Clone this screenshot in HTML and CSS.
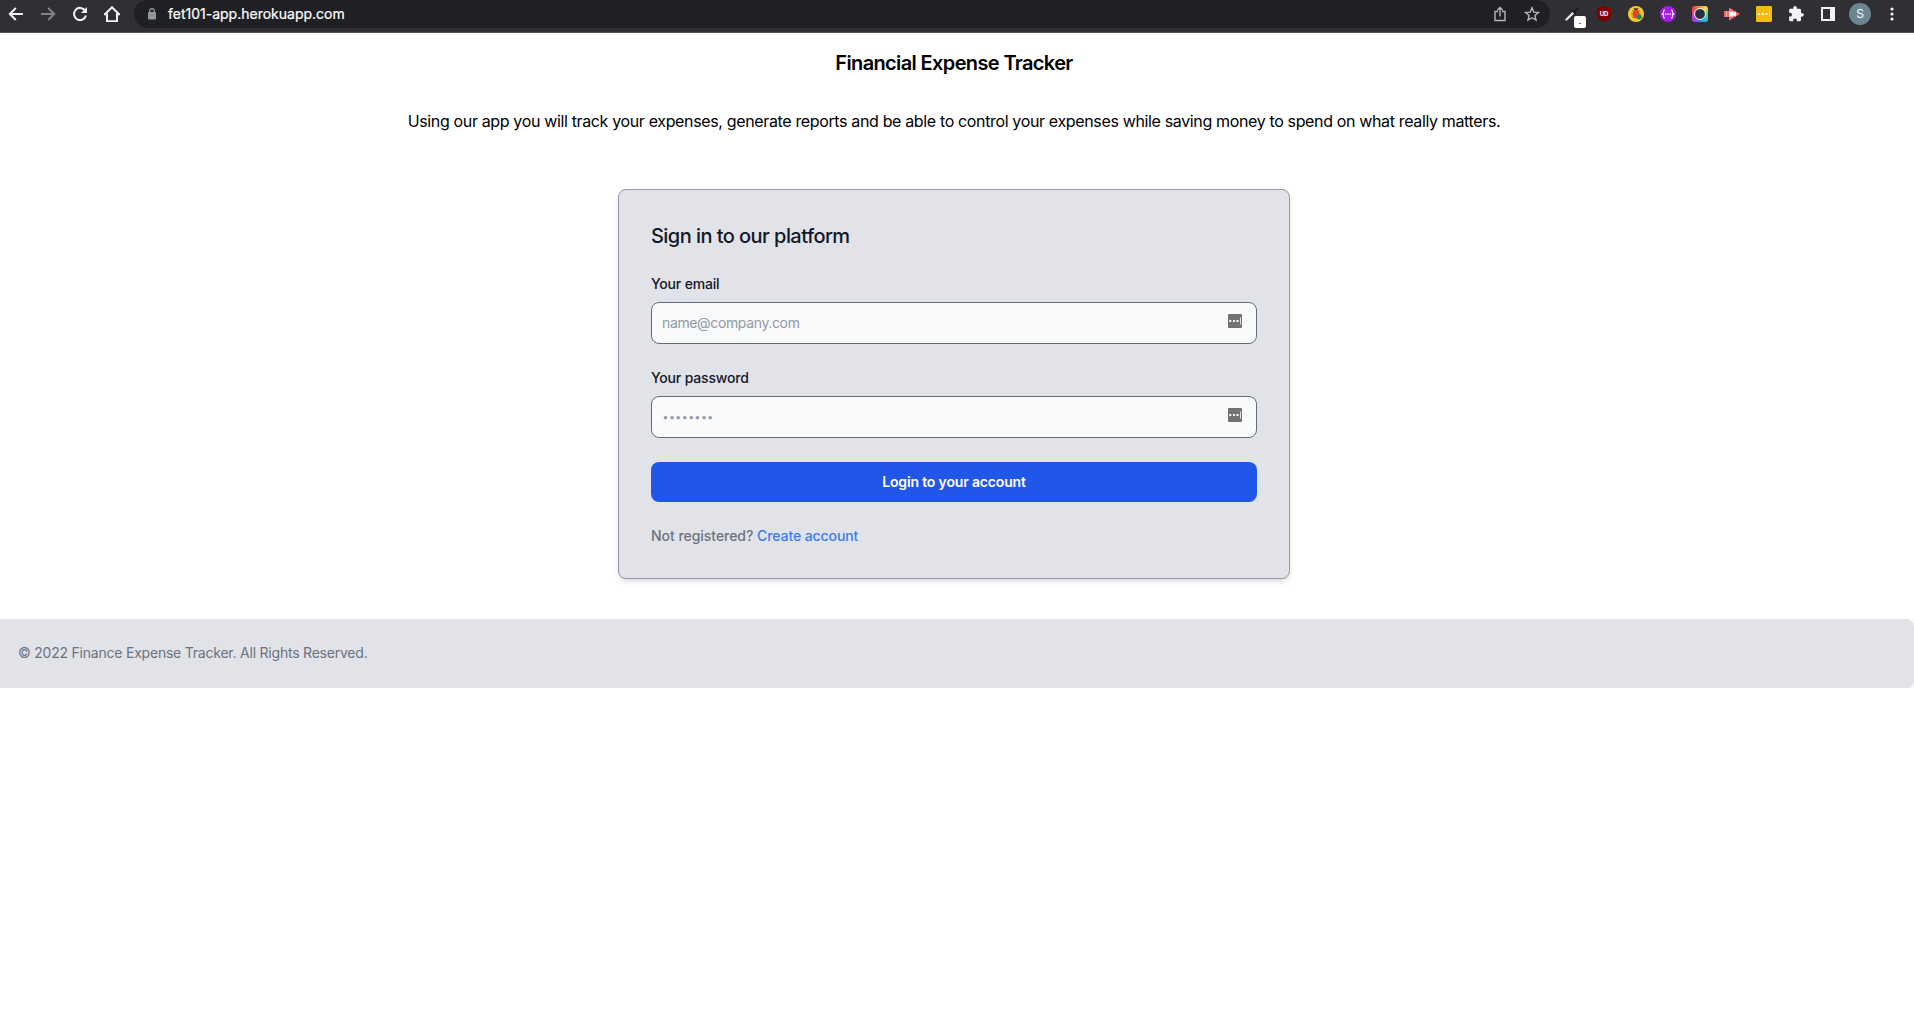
FILE: index.html
```html
<!DOCTYPE html>
<html lang="en">
<head>
<meta charset="utf-8">
<title>Financial Expense Tracker</title>
<link rel="stylesheet" href="styles.css">
</head>
<body>
<header class="toolbar">
  <span class="cell"><svg width="16" height="16" viewBox="0 0 16 16"><path class="line bright" d="M15 8H2M7.8 2 1.8 8l6 6"/></svg></span>
  <span class="cell"><svg width="16" height="16" viewBox="0 0 16 16"><path class="line dim" d="M1 8h13M8.2 2l6 6-6 6"/></svg></span>
  <span class="cell"><svg width="16" height="16" viewBox="0 0 16 16"><path class="line bright" d="M13.2 4.6A6.1 6.1 0 1 0 14 9.6"/><path fill="#f1f3f4" d="M15 1v6H9z"/></svg></span>
  <span class="cell"><svg width="16" height="16" viewBox="0 0 16 16"><path class="line bright" d="M.9 8.2 8 1.3l7.1 6.9H13v7H3v-7z"/></svg></span>
  <div class="address">
    <svg width="10" height="12" viewBox="0 0 10 12"><path fill="none" stroke="#9aa0a6" stroke-width="1.2" d="M2.7 5V3a2.3 2.3 0 0 1 4.6 0v2"/><rect x="1" y="4" width="8" height="7.5" rx="1" fill="#8e979d"/></svg>
    <span class="url">fet101-app.herokuapp.com</span>
    <span class="cell"><svg width="16" height="16" viewBox="0 0 16 16"><path class="thin" d="M6 5.500H3v9h10v-9h-3M8 10.500V1.600M5.300 4.200 8 1.500l2.700 2.700"/></svg></span>
    <span class="cell"><svg width="16" height="16" viewBox="0 0 16 16"><path class="thin" d="m8 1.8 1.8 4.3 4.7.4-3.6 3 1.1 4.6-4-2.400-4 2.400 1.100-4.600-3.600-3 4.700-.4z"/></svg></span>
  </div>
  <span class="cell picker"><svg width="16" height="16" viewBox="0 0 16 16"><path d="m2.500 13.500 6.500-6.500" stroke="#e5e7e8" stroke-width="2.400" stroke-linecap="round"/><path d="m8.500 4.500 3 3M10.500 5.500 13.500 2.500" stroke="#1b1c1e" stroke-width="2" stroke-linecap="round"/></svg><b class="badge">.</b></span>
  <span class="cell"><svg width="16" height="16" viewBox="0 0 16 16"><path fill="#800000" d="M8 0c2 1.300 4 2 7 2.200V8c0 4-3 6.500-7 8-4-1.500-7-4-7-8V2.200C4 2 6 1.300 8 0z"/><text class="shield" x="8" y="9.700">UD</text></svg></span>
  <span class="cell"><svg width="16" height="16" viewBox="0 0 16 16"><circle cx="8" cy="8" r="8" fill="#f7c92f"/><path stroke="#a0632b" stroke-width=".8" d="m4 4 8 8M3 8h10M12 4l-8 8M5.500 2.500 8 5l2.500-2.500"/><ellipse cx="8" cy="8" rx="3.400" ry="4.600" fill="#d94b24"/><circle cx="11.300" cy="11" r="2.500" fill="#178b65"/></svg></span>
  <span class="cell"><svg width="16" height="16" viewBox="0 0 16 16"><circle cx="8" cy="8" r="8" fill="#a51ee8"/><path fill="none" stroke="#fff" stroke-width="1.100" d="M5 4q-1.500 0-1.500 1.500V7L2.300 8l1.200 1v1.500Q3.500 12 5 12M11 4q1.500 0 1.500 1.500V7l1.200 1-1.200 1v1.500Q12.500 12 11 12"/><path fill="#fff" d="M5 7.400h1.500v1.300H5zM7.300 7.400h1.500v1.300H7.300zM9.600 7.400h1.500v1.300H9.600z"/></svg></span>
  <span class="cell"><i class="rainbow"></i></span>
  <span class="cell"><svg width="16" height="16" viewBox="0 0 16 16"><path fill="#ff6568" d="M0 5h5V1.500L16 8 5 14.500V11H0z"/><path fill="#fff" d="M5 5.500h4v1.200L12 5.500v5L9 9.300v1.200H5z"/><path stroke="#f4a9aa" d="M2.500 5v6"/></svg></span>
  <span class="cell"><svg width="16" height="16" viewBox="0 0 16 16"><rect width="16" height="16" rx="1.300" fill="#f2b90f"/><path fill="#fff" d="M2 7h2v2H2zM5.700 7h2v2h-2zM9.400 7h2v2h-2z"/><path stroke="#f9dc82" d="M13.500 5v6"/></svg></span>
  <span class="cell"><svg width="16" height="16" viewBox="0 0 24 24"><path fill="#f1f3f4" d="M21 10.500h-1.500V6.300a2 2 0 0 0-2-2h-4.200V2.800a2.700 2.700 0 0 0-5.400 0v1.500H3.700a2 2 0 0 0-2 2v4h1.500a2.800 2.800 0 0 1 0 5.600H1.700V21a2 2 0 0 0 2 2h4v-1.500a2.800 2.800 0 0 1 5.600 0V23h4.200a2 2 0 0 0 2-2v-5H21a2.750 2.750 0 0 0 0-5.500z"/></svg></span>
  <span class="cell"><svg width="14" height="14" viewBox="0 0 14 14"><path fill="#f1f3f4" fill-rule="evenodd" d="M0 0h14v14H0zM2 2v10h7V2z"/></svg></span>
  <span class="cell"><span class="avatar">S</span></span>
  <span class="cell"><svg width="4" height="14" viewBox="0 0 4 14"><g fill="#f1f3f4"><circle cx="2" cy="2" r="1.600"/><circle cx="2" cy="7" r="1.600"/><circle cx="2" cy="12" r="1.600"/></g></svg></span>
</header>

<main class="page">
  <h1 class="title">Financial Expense Tracker</h1>
  <p class="lead">Using our app you will track your expenses, generate reports and be able to control your expenses while saving money to spend on what really matters.</p>
  <form class="card">
    <h2 class="heading">Sign in to our platform</h2>
    <label class="label">Your email</label>
    <div class="field"><span class="placeholder">name@company.com</span>
      <svg class="filler" width="14" height="14" viewBox="0 0 14 14"><rect width="14" height="14" rx="1" fill="#737373"/><path fill="#fff" d="M1.300 6h2v2h-2zM5 6h2v2H5zM8.500 6h2v2h-2z"/><path stroke="#ddd" d="M12.500 3.500v7"/></svg>
    </div>
    <label class="label">Your password</label>
    <div class="field"><span class="placeholder dots">••••••••</span>
      <svg class="filler" width="14" height="14" viewBox="0 0 14 14"><rect width="14" height="14" rx="1" fill="#737373"/><path fill="#fff" d="M1.300 6h2v2h-2zM5 6h2v2H5zM8.500 6h2v2h-2z"/><path stroke="#ddd" d="M12.500 3.500v7"/></svg>
    </div>
    <button class="login" type="button">Login to your account</button>
    <div class="register">Not registered? <a class="link">Create account</a></div>
  </form>
</main>
<footer class="footer">© 2022 Finance Expense Tracker. All Rights Reserved.</footer>
</body>
</html>
```
FILE: styles.css
```css
*, ::before, ::after { box-sizing: border-box; }
body { margin: 0; background: #fff; color: #000; font-family: Inter, "Liberation Sans", sans-serif; }
h1, h2, p { margin: 0; }
svg { display: block; flex: none; }

.toolbar { display: flex; height: 33px; padding-right: 6px; background: #303034; border-bottom: 1px solid #55565a; }
.cell { display: flex; flex: none; align-items: center; justify-content: center; width: 32px; height: 28px; }
.line { fill: none; stroke-width: 2; }
.bright { stroke: #f1f3f4; }
.dim { stroke: #828387; }
.thin { fill: none; stroke: #b4b6b9; stroke-width: 1.4; }
.address { display: flex; flex: 1; align-items: center; height: 28px; margin: 0 6px; padding: 0 2px 0 13px; border-radius: 14px; background: #1f2024; }
.url { flex: 1; margin-left: 11px; color: #fff; font-size: 14px; line-height: 28px; -webkit-text-stroke: .2px #fff; }
.picker { position: relative; }
.badge { position: absolute; left: 18px; top: 16px; width: 12px; height: 12px; border-radius: 2px; background: #fff; color: #000; font-size: 8px; font-weight: 500; line-height: 11px; text-align: center; }
.shield { fill: #fff; font-size: 6px; font-weight: 700; text-anchor: middle; }
.rainbow { display: flex; align-items: center; justify-content: center; width: 16px; height: 16px; border-radius: 3px; background: conic-gradient(#ff9a3c, #ffdc3d, #41d477, #22c9d8, #367bf5, #a63be8, #e83bc0, #f4484b, #ff9a3c); }
.rainbow::after { content: ""; width: 12px; height: 12px; border: 1.5px solid #fff; border-radius: 50%; background: #263039; }
.avatar { width: 22px; height: 22px; border-radius: 50%; background: #6b8591; color: #fff; font-size: 12px; line-height: 22px; text-align: center; }

.page { display: flex; flex-direction: column; align-items: center; padding: 16px 6px 40px 0; }
.title { font-size: 20px; font-weight: 600; line-height: 28px; letter-spacing: -.63px; }
.lead { margin-top: 32px; font-size: 16px; line-height: 24px; letter-spacing: -.354px; white-space: nowrap; }
.card { width: 672px; height: 390px; margin-top: 56px; padding: 32px; border: 1px solid #9299a8; border-radius: 8px; background: #e2e3e8; box-shadow: 0 4px 6px -1px rgba(0,0,0,.1), 0 2px 4px -2px rgba(0,0,0,.1); }
.heading { margin-bottom: 24px; color: #111827; font-size: 20px; font-weight: 500; line-height: 28px; letter-spacing: -.55px; }
.label { display: block; margin-bottom: 8px; color: #111827; font-size: 14px; font-weight: 500; line-height: 20px; letter-spacing: -.18px; }
.field { display: flex; justify-content: space-between; height: 42px; margin-bottom: 24px; padding: 10px 14px 10px 10px; border: 1px solid #646b7b; border-radius: 8px; background: #f9fafb; }
.filler { margin-top: 1px; }
.placeholder { color: #9299a6; font-size: 14px; line-height: 20px; letter-spacing: -.36px; }
.dots { margin-left: .5px; padding-top: 1px; font-size: 10.5px; letter-spacing: .5px; }
.login { display: block; width: 100%; height: 40px; padding: 0; border: 0; border-radius: 8px; background: #2157e8; color: #fff; font: 600 14px/20px Inter, "Liberation Sans", sans-serif; letter-spacing: -.16px; }
.register { margin-top: 24px; color: #6b7280; font-size: 14px; font-weight: 500; line-height: 20px; letter-spacing: -.04px; }
.link { color: #387bf1; letter-spacing: -.09px; }
.footer { height: 69px; padding: 24px 18px; border-radius: 0 8px 8px 0; background: #e2e3e8; color: #6b7280; font-size: 14px; line-height: 20px; letter-spacing: -.22px; box-shadow: 0 1px 3px rgba(0,0,0,.1); }
```
